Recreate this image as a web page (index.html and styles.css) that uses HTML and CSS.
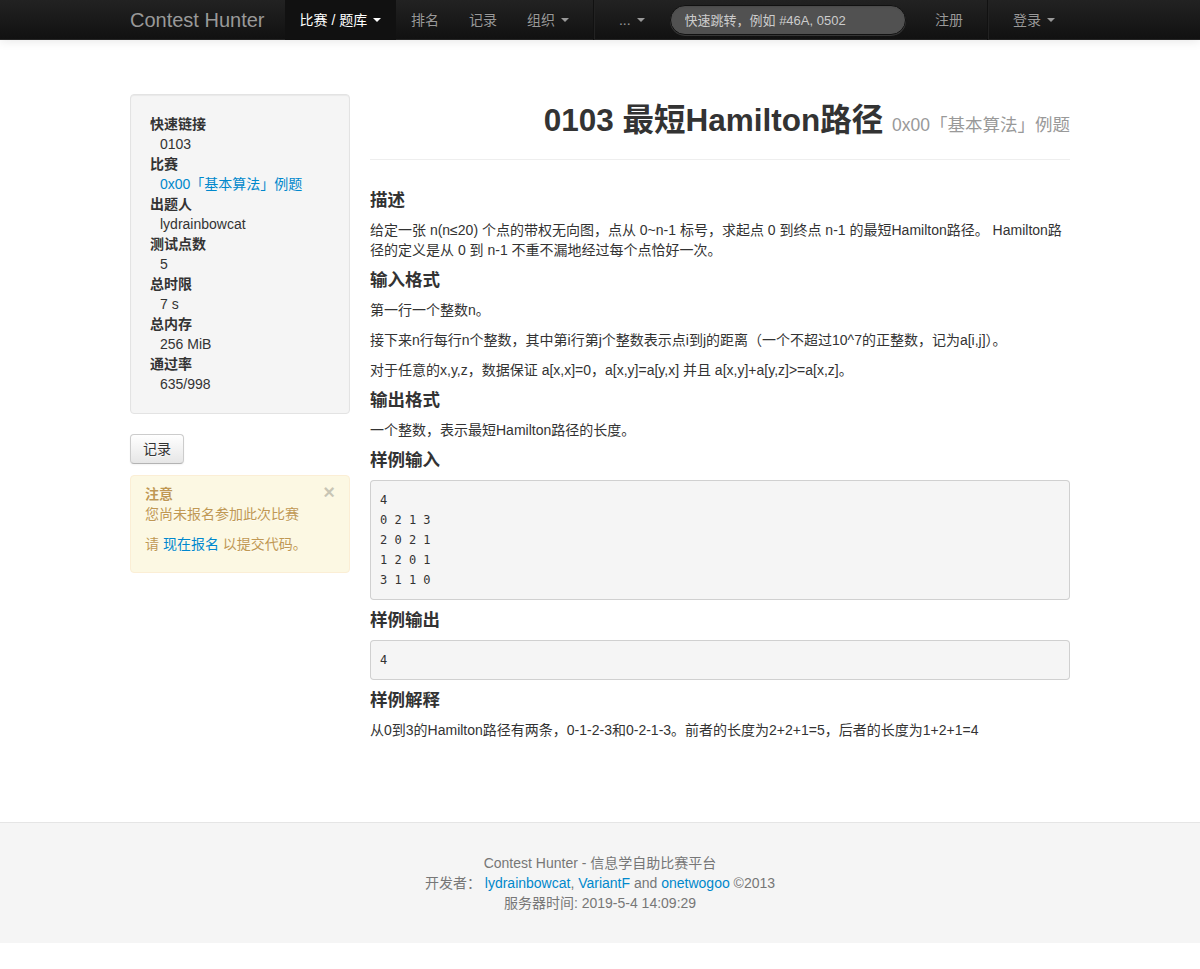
FILE: index.html
```html
<!DOCTYPE html>
<html lang="zh-CN">
<head>
<meta charset="utf-8">
<title>0103 最短Hamilton路径 - Contest Hunter</title>
<link rel="stylesheet" href="styles.css">
</head>
<body>
<header class="navbar">
  <div class="container nav-row">
    <a class="brand" href="#">Contest Hunter</a>
    <ul class="nav">
      <li class="active"><a href="#">比赛 / 题库 <b class="caret"></b></a></li>
      <li><a href="#">排名</a></li>
      <li><a href="#">记录</a></li>
      <li><a href="#">组织 <b class="caret"></b></a></li>
      <li class="divider-vertical"></li>
      <li><a href="#">... <b class="caret"></b></a></li>
    </ul>
    <form class="navbar-search">
      <input class="search-query" type="text" placeholder="快速跳转，例如 #46A, 0502">
    </form>
    <ul class="nav nav-right">
      <li><a href="#">注册</a></li>
      <li class="divider-vertical"></li>
      <li><a href="#">登录 <b class="caret"></b></a></li>
    </ul>
  </div>
</header>

<div class="container main">
  <aside class="sidebar">
    <div class="well">
      <dl class="info">
        <dt>快速链接</dt><dd>0103</dd>
        <dt>比赛</dt><dd><a href="#">0x00「基本算法」例题</a></dd>
        <dt>出题人</dt><dd>lydrainbowcat</dd>
        <dt>测试点数</dt><dd>5</dd>
        <dt>总时限</dt><dd>7 s</dd>
        <dt>总内存</dt><dd>256 MiB</dd>
        <dt>通过率</dt><dd>635/998</dd>
      </dl>
    </div>
    <div class="side-actions">
      <a class="btn" href="#">记录</a>
    </div>
    <div class="alert">
      <span class="close">&times;</span>
      <strong>注意</strong>
      <p>您尚未报名参加此次比赛</p>
      <p>请 <a href="#">现在报名</a> 以提交代码。</p>
    </div>
  </aside>

  <main class="content">
    <div class="page-header">
      <h2>0103 最短Hamilton路径 <small>0x00「基本算法」例题</small></h2>
    </div>

    <h4>描述</h4>
    <p>给定一张 n(n≤20) 个点的带权无向图，点从 0~n-1 标号，求起点 0 到终点 n-1 的最短Hamilton路径。 Hamilton路径的定义是从 0 到 n-1 不重不漏地经过每个点恰好一次。</p>

    <h4>输入格式</h4>
    <p>第一行一个整数n。</p>
    <p>接下来n行每行n个整数，其中第i行第j个整数表示点i到j的距离（一个不超过10^7的正整数，记为a[i,j]）。</p>
    <p>对于任意的x,y,z，数据保证 a[x,x]=0，a[x,y]=a[y,x] 并且 a[x,y]+a[y,z]&gt;=a[x,z]。</p>

    <h4>输出格式</h4>
    <p>一个整数，表示最短Hamilton路径的长度。</p>

    <h4>样例输入</h4>
    <pre>4
0 2 1 3
2 0 2 1
1 2 0 1
3 1 1 0</pre>

    <h4>样例输出</h4>
    <pre>4</pre>

    <h4>样例解释</h4>
    <p>从0到3的Hamilton路径有两条，0-1-2-3和0-2-1-3。前者的长度为2+2+1=5，后者的长度为1+2+1=4</p>
  </main>
</div>

<footer class="footer">
  <p>Contest Hunter - 信息学自助比赛平台</p>
  <p>开发者： <a href="#">lydrainbowcat</a>, <a href="#">VariantF</a> and <a href="#">onetwogoo</a> ©2013</p>
  <p>服务器时间: 2019-5-4 14:09:29</p>
</footer>
</body>
</html>
```

FILE: styles.css
```css
* { box-sizing: border-box; }

html, body {
  margin: 0;
  padding: 0;
}

body {
  font-family: "Liberation Sans", Arial, "Noto Sans CJK SC", sans-serif;
  font-size: 14px;
  line-height: 20px;
  color: #333;
  background: #fff;
}

a {
  color: #0088cc;
  text-decoration: none;
}

.container {
  width: 940px;
  margin: 0 auto;
}

/* ---------- navbar ---------- */
.navbar {
  height: 40px;
  background: linear-gradient(to bottom, #222222, #111111);
  border-bottom: 1px solid #252525;
  box-shadow: 0 1px 10px rgba(0, 0, 0, 0.1);
}

.nav-row {
  display: flex;
  align-items: stretch;
  height: 40px;
}

.brand {
  display: block;
  padding: 10px 20px 10px 0;
  font-size: 20px;
  font-weight: 200;
  color: #999;
  line-height: 20px;
}

.nav {
  display: flex;
  list-style: none;
  margin: 0;
  padding: 0;
}

.nav li a {
  display: block;
  padding: 10px 15px;
  line-height: 20px;
  color: #999;
  text-shadow: 0 -1px 0 rgba(0, 0, 0, 0.25);
}

.nav li.active a {
  background: #111;
  color: #fff;
}

.caret {
  display: inline-block;
  width: 0;
  height: 0;
  vertical-align: top;
  margin-top: 8px;
  margin-left: 2px;
  border-top: 4px solid #999;
  border-left: 4px solid transparent;
  border-right: 4px solid transparent;
}

.nav li.active .caret {
  border-top-color: #fff;
}

.divider-vertical {
  width: 2px;
  height: 40px;
  margin: 0 9px;
  border-left: 1px solid #111;
  border-right: 1px solid #222;
}

.navbar-search {
  margin: 5px 0 0 10px;
}

.search-query {
  width: 236px;
  height: 30px;
  padding: 4px 14px;
  font-family: "Liberation Sans", Arial, "Noto Sans CJK SC", sans-serif;
  font-size: 13px;
  line-height: 20px;
  color: #fff;
  background: #515151;
  border: 1px solid #111;
  border-radius: 15px;
  box-shadow: inset 0 1px 2px rgba(0, 0, 0, 0.1), 0 1px 0 rgba(255, 255, 255, 0.15);
  outline: none;
}

.search-query::placeholder {
  color: #ccc;
}

.nav-right {
  margin-left: auto;
}

/* ---------- main ---------- */
.main {
  display: grid;
  grid-template-columns: 220px 700px;
  column-gap: 20px;
  padding-top: 54px;
}

.well {
  background: #f5f5f5;
  border: 1px solid #e3e3e3;
  border-radius: 4px;
  padding: 19px;
  box-shadow: inset 0 1px 1px rgba(0, 0, 0, 0.05);
}

.info {
  margin: 0;
}

.info dt {
  font-weight: bold;
}

.info dd {
  margin-left: 10px;
}

.side-actions {
  margin: 20px 0 11px;
  height: 30px;
}

.btn {
  display: inline-block;
  padding: 4px 12px;
  font-size: 14px;
  line-height: 20px;
  color: #333;
  text-shadow: 0 1px 1px rgba(255, 255, 255, 0.75);
  background: linear-gradient(to bottom, #ffffff, #e6e6e6);
  border: 1px solid #cccccc;
  border-bottom-color: #b3b3b3;
  border-radius: 4px;
  box-shadow: inset 0 1px 0 rgba(255, 255, 255, 0.2), 0 1px 2px rgba(0, 0, 0, 0.05);
}

.alert {
  position: relative;
  padding: 8px 35px 8px 14px;
  background: #fcf8e3;
  border: 1px solid #fbeed5;
  border-radius: 4px;
  color: #c09853;
  text-shadow: 0 1px 0 rgba(255, 255, 255, 0.5);
}

.alert strong {
  display: block;
}

.alert p {
  margin: 0 0 10px;
}

.close {
  position: absolute;
  top: 6px;
  right: 14px;
  font-size: 20px;
  font-weight: bold;
  line-height: 20px;
  color: #000;
  opacity: 0.2;
  text-shadow: 0 1px 0 #fff;
}

/* ---------- content ---------- */
.page-header {
  padding-bottom: 9px;
  margin: 0 0 30px;
  border-bottom: 1px solid #eee;
  text-align: right;
}

.page-header h2 {
  margin: 6px 0 10px;
  font-size: 31.5px;
  line-height: 40px;
  font-weight: bold;
  color: #333;
}

.page-header small {
  font-size: 17.5px;
  line-height: 1;
  font-weight: normal;
  color: #999;
}

.content h4 {
  margin: 10px 0;
  font-size: 17.5px;
  line-height: 20px;
  font-weight: bold;
}

.content p {
  margin: 0 0 10px;
}

.content pre {
  margin: 0 0 10px;
  padding: 9px;
  font-family: "DejaVu Sans Mono", "Liberation Mono", monospace;
  font-size: 12px;
  line-height: 20px;
  color: #333;
  background: #f5f5f5;
  border: 1px solid rgba(0, 0, 0, 0.15);
  border-radius: 4px;
  white-space: pre;
}

/* ---------- footer ---------- */
.footer {
  margin-top: 72px;
  padding: 30px 0;
  background: #f5f5f5;
  border-top: 1px solid #e5e5e5;
  text-align: center;
  color: #777;
}

.footer p {
  margin: 0;
}
```
